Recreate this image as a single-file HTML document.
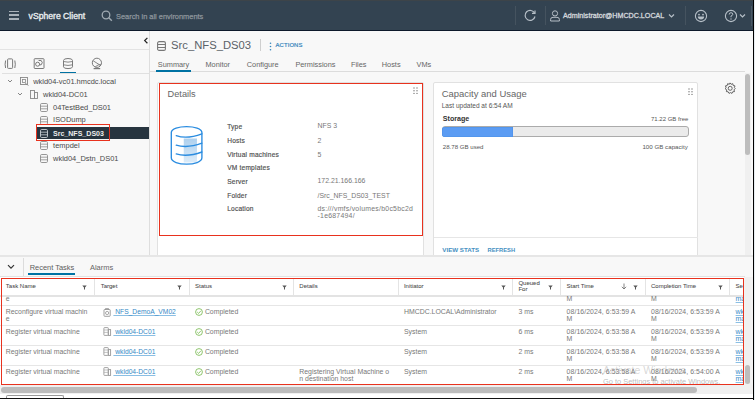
<!DOCTYPE html>
<html><head><meta charset="utf-8">
<style>
*{box-sizing:border-box;margin:0;padding:0}
html,body{width:755px;height:400px;overflow:hidden;background:#fff}
body{position:relative;font-family:"Liberation Sans",sans-serif;color:#565656}
.a{position:absolute;white-space:nowrap}
svg.a{overflow:visible}
</style></head><body>
<div class="a" style="left:0px;top:0px;width:753px;height:31px;background:#334351;"></div>
<div class="a" style="left:0px;top:0px;width:753px;height:1px;background:#3d4449;"></div>
<div class="a" style="left:0px;top:30px;width:753px;height:1px;background:#0d1a2b;"></div>
<div class="a" style="left:9px;top:10.8px;width:10px;height:1.6px;background:#a9b2ba;"></div>
<div class="a" style="left:9px;top:14.4px;width:10px;height:1.6px;background:#a9b2ba;"></div>
<div class="a" style="left:9px;top:18px;width:10px;height:1.6px;background:#a9b2ba;"></div>
<div class="a" style="left:28.6px;top:10.58px;font-size:8.65px;line-height:11.25px;color:#e9ecef;-webkit-text-stroke:0.35px #e9ecef;">vSphere Client</div>
<svg class="a" style="left:101px;top:10px" width="12" height="12" viewBox="0 0 12 12"><circle cx="5" cy="5" r="3.8" fill="none" stroke="#a0aab2" stroke-width="1.3"/><line x1="7.8" y1="7.8" x2="10.8" y2="10.8" stroke="#a0aab2" stroke-width="1.4"/></svg>
<div class="a" style="left:116px;top:12.10px;font-size:7.42px;line-height:9.65px;color:#8d959c;-webkit-text-stroke:0.25px #8d959c;">Search in all environments</div>
<div class="a" style="left:515px;top:6px;width:1px;height:19px;background:#45535f;"></div>
<svg class="a" style="left:524px;top:9px" width="13" height="13" viewBox="0 0 13 13"><path d="M10.6 4.2 A5 5 0 1 0 11 7.5" fill="none" stroke="#b6bfc7" stroke-width="1.2"/><path d="M8 4.4 L11 4.4 L11 1.4" fill="none" stroke="#b6bfc7" stroke-width="1.2"/></svg>
<div class="a" style="left:545px;top:6px;width:1px;height:19px;background:#45535f;"></div>
<svg class="a" style="left:550px;top:10px" width="10" height="12" viewBox="0 0 10 12"><circle cx="5" cy="3.4" r="2.6" fill="none" stroke="#b6bfc7" stroke-width="1"/><path d="M0.6 11 L0.6 9.5 Q0.6 7.3 3 7.3 L7 7.3 Q9.4 7.3 9.4 9.5 L9.4 11 Z" fill="none" stroke="#b6bfc7" stroke-width="1"/></svg>
<div class="a" style="left:563px;top:12.38px;font-size:7.15px;line-height:9.29px;color:#d3d8dc;-webkit-text-stroke:0.3px #d3d8dc;">Administrator@HMCDC.LOCAL</div>
<svg class="a" style="left:668px;top:12.5px" width="7" height="6" viewBox="0 0 7 6"><path d="M1 1.5 L3.5 4 L6 1.5" fill="none" stroke="#b6bfc7" stroke-width="1.2"/></svg>
<div class="a" style="left:685px;top:6px;width:1px;height:19px;background:#45535f;"></div>
<svg class="a" style="left:694px;top:9px" width="14" height="14" viewBox="0 0 14 14"><circle cx="7" cy="7" r="5.6" fill="none" stroke="#b6bfc7" stroke-width="1.1"/><circle cx="5" cy="5.6" r="0.9" fill="#b6bfc7"/><circle cx="9" cy="5.6" r="0.9" fill="#b6bfc7"/><path d="M3.8 7.6 L10.2 7.6 Q10 10.6 7 10.6 Q4 10.6 3.8 7.6Z" fill="#b6bfc7"/></svg>
<svg class="a" style="left:724px;top:9px" width="14" height="14" viewBox="0 0 14 14"><circle cx="7" cy="7" r="5.6" fill="none" stroke="#b6bfc7" stroke-width="1.1"/><path d="M5.2 5.5 Q5.2 3.7 7 3.7 Q8.8 3.7 8.8 5.3 Q8.8 6.4 7 7 L7 8.3" fill="none" stroke="#b6bfc7" stroke-width="1"/><circle cx="7" cy="10" r="0.7" fill="#b6bfc7"/></svg>
<svg class="a" style="left:739px;top:13px" width="7" height="6" viewBox="0 0 7 6"><path d="M1 1.5 L3.5 4 L6 1.5" fill="none" stroke="#b6bfc7" stroke-width="1.2"/></svg>
<div class="a" style="left:751px;top:6px;width:1px;height:20px;background:#4a5864;"></div>
<div class="a" style="left:753px;top:0px;width:1px;height:400px;background:#000;"></div>
<div class="a" style="left:754px;top:0px;width:1px;height:400px;background:#e8eef2;"></div>
<div class="a" style="left:0px;top:31px;width:149px;height:224px;background:#f8f8f8;"></div>
<div class="a" style="left:149px;top:31px;width:1px;height:224px;background:#dedede;"></div>
<svg class="a" style="left:142.5px;top:36px" width="6" height="9" viewBox="0 0 6 9"><path d="M4.4 1.9 L1.7 4.6 L4.4 7.3" fill="none" stroke="#222" stroke-width="1.25"/></svg>
<div class="a" style="left:0px;top:49px;width:149px;height:1px;background:#e3e3e3;"></div>
<svg class="a" style="left:0px;top:54px" width="110" height="20" viewBox="0 54 110 20"><g fill="none" stroke="#7a7a7a" stroke-width="1"><rect x="7.6" y="58.9" width="5" height="9.5" rx="0.8"/><path d="M5.6 60.5 Q4.6 64.3 5.6 68 M14.8 60.5 Q15.8 64.3 14.8 68"/><rect x="34.2" y="58.7" width="9.8" height="9.8" rx="0.6"/><circle cx="37.6" cy="64.2" r="2"/><path d="M38.6 60.5 L41.2 60.5 L42.3 62.6 L41.2 64.8 L39.3 64.8"/><path d="M63.5 60.5 Q63.5 58.5 68 58.5 Q72.5 58.5 72.5 60.5 L72.5 66.8 Q72.5 68.6 68 68.6 Q63.5 68.6 63.5 66.8 Z"/><path d="M63.5 61.5 Q68 62.8 72.5 61.5 M63.5 64.8 Q68 66.1 72.5 64.8" stroke-width="0.9"/><circle cx="96.9" cy="62.8" r="4.6"/><path d="M93.2 60.8 L100.2 65.2 M95.2 66.9 Q98 64.2 101.1 64.6" stroke-width="0.9"/><path d="M93.6 68.6 L100.2 68.6" stroke-width="1.2"/></g></svg>
<div class="a" style="left:60px;top:72px;width:16px;height:1.6px;background:#0072a3;"></div>
<div class="a" style="left:2px;top:73px;width:147px;height:1px;background:#e0e0e0;"></div>
<svg class="a" style="left:7px;top:79px" width="6" height="5" viewBox="0 0 6 5"><path d="M1 1 L3 3 L5 1" fill="none" stroke="#777" stroke-width="0.9"/></svg>
<svg class="a" style="left:20px;top:77px" width="9" height="9" viewBox="0 0 9 9"><rect x="0.5" y="0.5" width="7" height="7" fill="none" stroke="#888" stroke-width="0.9"/><rect x="2.5" y="2.5" width="3" height="3" fill="none" stroke="#888" stroke-width="0.8"/><path d="M5 6 L8.5 8.5" stroke="#888" stroke-width="0.8"/></svg>
<div class="a" style="left:33.2px;top:76.57px;font-size:7.45px;line-height:9.69px;color:#4a4a4a;">wkld04-vc01.hmcdc.local</div>
<svg class="a" style="left:17px;top:92px" width="6" height="5" viewBox="0 0 6 5"><path d="M1 1 L3 3 L5 1" fill="none" stroke="#777" stroke-width="0.9"/></svg>
<svg class="a" style="left:30px;top:90px" width="8" height="9" viewBox="0 0 8 9"><rect x="0.5" y="0.5" width="4" height="8" fill="none" stroke="#888" stroke-width="0.9"/><rect x="4.5" y="2.5" width="3" height="6" fill="none" stroke="#888" stroke-width="0.9"/></svg>
<div class="a" style="left:43.1px;top:89.57px;font-size:7.45px;line-height:9.69px;color:#4a4a4a;">wkld04-DC01</div>
<svg class="a" style="left:40px;top:103.0px" width="8" height="9" viewBox="0 0 8 9"><rect x="0.5" y="0.5" width="7" height="8" rx="1.2" fill="none" stroke="#8a8a8a" stroke-width="0.9"/><path d="M0.5 3.2 L7.5 3.2 M0.5 5.8 L7.5 5.8" stroke="#8a8a8a" stroke-width="0.8"/></svg>
<div class="a" style="left:53.1px;top:102.87px;font-size:7.45px;line-height:9.69px;color:#4a4a4a;">04TestBed_DS01</div>
<svg class="a" style="left:40px;top:115.5px" width="8" height="9" viewBox="0 0 8 9"><rect x="0.5" y="0.5" width="7" height="8" rx="1.2" fill="none" stroke="#8a8a8a" stroke-width="0.9"/><path d="M0.5 3.2 L7.5 3.2 M0.5 5.8 L7.5 5.8" stroke="#8a8a8a" stroke-width="0.8"/></svg>
<div class="a" style="left:53.1px;top:115.37px;font-size:7.45px;line-height:9.69px;color:#4a4a4a;">ISODump</div>
<svg class="a" style="left:40px;top:141.25px" width="8" height="9" viewBox="0 0 8 9"><rect x="0.5" y="0.5" width="7" height="8" rx="1.2" fill="none" stroke="#8a8a8a" stroke-width="0.9"/><path d="M0.5 3.2 L7.5 3.2 M0.5 5.8 L7.5 5.8" stroke="#8a8a8a" stroke-width="0.8"/></svg>
<div class="a" style="left:53.1px;top:141.12px;font-size:7.45px;line-height:9.69px;color:#4a4a4a;">tempdel</div>
<svg class="a" style="left:40px;top:154.25px" width="8" height="9" viewBox="0 0 8 9"><rect x="0.5" y="0.5" width="7" height="8" rx="1.2" fill="none" stroke="#8a8a8a" stroke-width="0.9"/><path d="M0.5 3.2 L7.5 3.2 M0.5 5.8 L7.5 5.8" stroke="#8a8a8a" stroke-width="0.8"/></svg>
<div class="a" style="left:53.1px;top:154.12px;font-size:7.45px;line-height:9.69px;color:#4a4a4a;">wkld04_Dstn_DS01</div>
<div class="a" style="left:36px;top:127px;width:113px;height:12px;background:#27343f;"></div>
<svg class="a" style="left:40px;top:128.5px" width="8" height="9" viewBox="0 0 8 9"><rect x="0.5" y="0.5" width="7" height="8" rx="1.2" fill="none" stroke="#c9d0d6" stroke-width="0.9"/><path d="M0.5 3.2 L7.5 3.2 M0.5 5.8 L7.5 5.8" stroke="#c9d0d6" stroke-width="0.8"/></svg>
<div class="a" style="left:53px;top:128.77px;font-size:7.05px;line-height:9.17px;color:#ececec;font-weight:bold;">Src_NFS_DS03</div>
<div class="a" style="left:36px;top:124px;width:74px;height:16.8px;background:transparent;border:1.5px solid #e8321e;"></div>
<div class="a" style="left:150px;top:31px;width:603px;height:224px;background:#f8f8f8;"></div>
<svg class="a" style="left:157px;top:41px" width="9" height="10" viewBox="0 0 9 10"><rect x="0.6" y="0.6" width="7.8" height="8.8" rx="1.5" fill="none" stroke="#777" stroke-width="1.1"/><path d="M0.6 3.5 L8.4 3.5 M0.6 6.5 L8.4 6.5" stroke="#777" stroke-width="1"/></svg>
<div class="a" style="left:171px;top:37.79px;font-size:11.25px;line-height:14.62px;color:#5b6268;">Src_NFS_DS03</div>
<div class="a" style="left:260px;top:39px;width:1px;height:12px;background:#cfcfcf;"></div>
<svg class="a" style="left:269px;top:42px" width="3" height="9" viewBox="0 0 3 9"><circle cx="1.5" cy="1.2" r="0.8" fill="#3585bc"/><circle cx="1.5" cy="4.5" r="0.8" fill="#3585bc"/><circle cx="1.5" cy="7.8" r="0.8" fill="#3585bc"/></svg>
<div class="a" style="left:275.6px;top:41.77px;font-size:5.85px;line-height:7.6px;color:#3585bc;letter-spacing:0.12px;-webkit-text-stroke:0.2px #3585bc;">ACTIONS</div>
<div class="a" style="left:157.8px;top:59.68px;font-size:7.35px;line-height:9.55px;color:#666;">Summary</div>
<div class="a" style="left:205.5px;top:59.68px;font-size:7.35px;line-height:9.55px;color:#666;">Monitor</div>
<div class="a" style="left:246.8px;top:59.68px;font-size:7.35px;line-height:9.55px;color:#666;">Configure</div>
<div class="a" style="left:295.4px;top:59.68px;font-size:7.35px;line-height:9.55px;color:#666;">Permissions</div>
<div class="a" style="left:351px;top:59.68px;font-size:7.35px;line-height:9.55px;color:#666;">Files</div>
<div class="a" style="left:381.8px;top:59.68px;font-size:7.35px;line-height:9.55px;color:#666;">Hosts</div>
<div class="a" style="left:416.6px;top:59.68px;font-size:7.35px;line-height:9.55px;color:#666;">VMs</div>
<div class="a" style="left:150px;top:71px;width:595px;height:1px;background:#dcdcdc;"></div>
<div class="a" style="left:156px;top:70.3px;width:35px;height:1.7px;background:#0072a3;"></div>
<svg class="a" style="left:724px;top:82px" width="12" height="12" viewBox="0 0 12 12"><path d="M6 0.9 L7.1 2.3 L8.8 1.7 L9.2 3.5 L11 3.9 L10.4 5.6 L11.2 6.6 L10 7.9 L10.5 9.6 L8.7 9.8 L8 11.4 L6.5 10.6 L5 11.4 L4.2 9.8 L2.4 9.6 L2.8 7.9 L1 6.6 L2.2 5.6 L1.4 3.9 L3.2 3.5 L3.6 1.7 L5.3 2.3 Z" fill="none" stroke="#555" stroke-width="0.9" stroke-linejoin="round"/><circle cx="6.2" cy="6.3" r="2" fill="none" stroke="#555" stroke-width="0.9"/></svg>
<div class="a" style="left:745px;top:73px;width:6px;height:182px;background:#f0f0f0;"></div>
<div class="a" style="left:745.3px;top:74px;width:4.8px;height:81px;background:#bdbdbd;border-radius:2.5px;"></div>
<div class="a" style="left:156.8px;top:81.5px;width:267.7px;height:180px;background:#fff;border:1px solid #e1e1e1;border-radius:2px;"></div>
<div class="a" style="left:159px;top:82.5px;width:264px;height:153px;background:transparent;border:1.5px solid #e8321e;"></div>
<div class="a" style="left:167.6px;top:89.33px;font-size:9.2px;line-height:11.96px;color:#666;">Details</div>
<svg class="a" style="left:413px;top:87px" width="5" height="8" viewBox="0 0 5 8"><circle cx="1" cy="1" r="0.7" fill="#777"/><circle cx="1" cy="3.7" r="0.7" fill="#777"/><circle cx="1" cy="6.4" r="0.7" fill="#777"/><circle cx="4" cy="1" r="0.7" fill="#777"/><circle cx="4" cy="3.7" r="0.7" fill="#777"/><circle cx="4" cy="6.4" r="0.7" fill="#777"/></svg>
<svg class="a" style="left:165px;top:120px" width="45" height="50" viewBox="0 0 45 50"><defs><linearGradient id="g1" x1="0" y1="0" x2="0" y2="1"><stop offset="0" stop-color="#aed0ee"/><stop offset="1" stop-color="#dcecf9"/></linearGradient></defs><rect x="18.75" y="18.5" width="13.2" height="24" fill="url(#g1)"/><path d="M6.3 12.5 C6.3 4.6 36.9 4.6 36.9 12.5 L36.9 37.8 C36.9 46.2 6.3 46.2 6.3 37.8 Z" fill="none" stroke="#2a8ce0" stroke-width="1.35"/><path d="M11.2 15.6 Q22 19.4 36.9 13.8 M11.2 25.1 Q22 28.6 36.9 23.2 M11.2 33.9 Q22 37.4 36.9 32" fill="none" stroke="#2a8ce0" stroke-width="1.35" stroke-linecap="round"/></svg>
<div class="a" style="left:227.2px;top:122.72px;font-size:6.6px;line-height:8.58px;color:#4e4e4e;letter-spacing:0.2px;-webkit-text-stroke:0.15px #4e4e4e;">Type</div>
<div class="a" style="left:317.5px;top:122.42px;font-size:6.9px;line-height:8.97px;color:#787878;">NFS 3</div>
<div class="a" style="left:227.2px;top:137.42px;font-size:6.6px;line-height:8.58px;color:#4e4e4e;letter-spacing:0.2px;-webkit-text-stroke:0.15px #4e4e4e;">Hosts</div>
<div class="a" style="left:317.5px;top:137.12px;font-size:6.9px;line-height:8.97px;color:#787878;">2</div>
<div class="a" style="left:227.2px;top:151.42px;font-size:6.6px;line-height:8.58px;color:#4e4e4e;letter-spacing:0.2px;-webkit-text-stroke:0.15px #4e4e4e;">Virtual machines</div>
<div class="a" style="left:317.5px;top:151.12px;font-size:6.9px;line-height:8.97px;color:#787878;">5</div>
<div class="a" style="left:227.2px;top:163.92px;font-size:6.6px;line-height:8.58px;color:#4e4e4e;letter-spacing:0.2px;-webkit-text-stroke:0.15px #4e4e4e;">VM templates</div>
<div class="a" style="left:227.2px;top:177.72px;font-size:6.6px;line-height:8.58px;color:#4e4e4e;letter-spacing:0.2px;-webkit-text-stroke:0.15px #4e4e4e;">Server</div>
<div class="a" style="left:317.5px;top:177.42px;font-size:6.9px;line-height:8.97px;color:#787878;">172.21.166.166</div>
<div class="a" style="left:227.2px;top:192.22px;font-size:6.6px;line-height:8.58px;color:#4e4e4e;letter-spacing:0.2px;-webkit-text-stroke:0.15px #4e4e4e;">Folder</div>
<div class="a" style="left:317.5px;top:191.92px;font-size:6.9px;line-height:8.97px;color:#787878;">/Src_NFS_DS03_TEST</div>
<div class="a" style="left:227.2px;top:204.82px;font-size:6.6px;line-height:8.58px;color:#4e4e4e;letter-spacing:0.2px;-webkit-text-stroke:0.15px #4e4e4e;">Location</div>
<div class="a" style="left:317.5px;top:204.52px;font-size:6.9px;line-height:8.97px;color:#787878;letter-spacing:0.25px;">ds:///vmfs/volumes/b0c5bc2d</div>
<div class="a" style="left:317.5px;top:212.32px;font-size:6.9px;line-height:8.97px;color:#787878;letter-spacing:0.25px;">-1e687494/</div>
<div class="a" style="left:432.5px;top:81.5px;width:265.5px;height:180px;background:#fff;border:1px solid #e1e1e1;border-radius:2px;"></div>
<div class="a" style="left:441.7px;top:87.78px;font-size:9.45px;line-height:12.29px;color:#666;">Capacity and Usage</div>
<svg class="a" style="left:688px;top:87.5px" width="5" height="8" viewBox="0 0 5 8"><circle cx="1" cy="1" r="0.7" fill="#777"/><circle cx="1" cy="3.7" r="0.7" fill="#777"/><circle cx="1" cy="6.4" r="0.7" fill="#777"/><circle cx="4" cy="1" r="0.7" fill="#777"/><circle cx="4" cy="3.7" r="0.7" fill="#777"/><circle cx="4" cy="6.4" r="0.7" fill="#777"/></svg>
<div class="a" style="left:441.7px;top:101.87px;font-size:6.55px;line-height:8.52px;color:#565656;">Last updated at 6:54 AM</div>
<div class="a" style="left:442.8px;top:114.82px;font-size:7.1px;line-height:9.23px;color:#333;font-weight:bold;">Storage</div>
<div class="a" style="left:651px;top:115.82px;font-size:6.0px;line-height:7.8px;color:#565656;">71.22 GB free</div>
<div class="a" style="left:441.7px;top:126.3px;width:247.3px;height:10.6px;background:#ebebeb;border:1px solid #ababab;border-radius:3px;"></div>
<div class="a" style="left:441.9px;top:126.6px;width:71.1px;height:10px;background:#5b9cf3;border-radius:3px 0 0 3px;box-shadow:inset 0 0 0 0.5px #4c8fe6;"></div>
<div class="a" style="left:442.8px;top:143.12px;font-size:6.1px;line-height:7.93px;color:#565656;">28.78 GB used</div>
<div class="a" style="left:642.4px;top:143.02px;font-size:6.2px;line-height:8.06px;color:#565656;">100 GB capacity</div>
<div class="a" style="left:433.5px;top:237px;width:264px;height:1px;background:#e6e6e6;"></div>
<div class="a" style="left:442.3px;top:245.62px;font-size:6.2px;line-height:8.06px;color:#4590c2;font-weight:bold;">VIEW STATS</div>
<div class="a" style="left:487.6px;top:246.67px;font-size:5.75px;line-height:7.48px;color:#4590c2;font-weight:bold;">REFRESH</div>
<div class="a" style="left:0px;top:255px;width:753px;height:23px;background:#f8f8f8;"></div>
<div class="a" style="left:0px;top:255px;width:753px;height:1.5px;background:#e6e6e6;"></div>
<svg class="a" style="left:7px;top:264px" width="8" height="6" viewBox="0 0 8 6"><path d="M1 1.2 L4 4.2 L7 1.2" fill="none" stroke="#333" stroke-width="1.2"/></svg>
<div class="a" style="left:22.5px;top:257.5px;width:1px;height:18px;background:#dcdcdc;"></div>
<div class="a" style="left:29.7px;top:263.07px;font-size:7.45px;line-height:9.69px;color:#5c5c5c;">Recent Tasks</div>
<div class="a" style="left:90px;top:263.07px;font-size:7.45px;line-height:9.69px;color:#666;">Alarms</div>
<div class="a" style="left:27.8px;top:273.3px;width:47.7px;height:1.6px;background:#0072a3;"></div>
<div class="a" style="left:0px;top:275.5px;width:745px;height:1px;background:#e2e2e2;"></div>
<div class="a" style="left:0px;top:276.5px;width:745px;height:109px;background:#fff;"></div>
<div class="a" style="left:0px;top:295px;width:745px;height:1.6px;background:#e3e3e3;"></div>
<div class="a" style="left:5.8px;top:282.82px;font-size:6.0px;line-height:7.8px;color:#4a4a4a;-webkit-text-stroke:0.05px #4a4a4a;">Task Name</div>
<svg class="a" style="left:82.3px;top:285px" width="5" height="5" viewBox="0 0 5 5"><path d="M0.3 0.5 L4.7 0.5 L3 2.5 L3 4.6 L2 4.6 L2 2.5 Z" fill="#555"/></svg>
<div class="a" style="left:94px;top:279px;width:1px;height:16px;background:#e4e4e4;"></div>
<div class="a" style="left:100.7px;top:282.82px;font-size:6.0px;line-height:7.8px;color:#4a4a4a;-webkit-text-stroke:0.05px #4a4a4a;">Target</div>
<svg class="a" style="left:176.8px;top:285px" width="5" height="5" viewBox="0 0 5 5"><path d="M0.3 0.5 L4.7 0.5 L3 2.5 L3 4.6 L2 4.6 L2 2.5 Z" fill="#555"/></svg>
<div class="a" style="left:188.6px;top:279px;width:1px;height:16px;background:#e4e4e4;"></div>
<div class="a" style="left:195px;top:282.82px;font-size:6.0px;line-height:7.8px;color:#4a4a4a;-webkit-text-stroke:0.05px #4a4a4a;">Status</div>
<svg class="a" style="left:281.5px;top:285px" width="5" height="5" viewBox="0 0 5 5"><path d="M0.3 0.5 L4.7 0.5 L3 2.5 L3 4.6 L2 4.6 L2 2.5 Z" fill="#555"/></svg>
<div class="a" style="left:293.3px;top:279px;width:1px;height:16px;background:#e4e4e4;"></div>
<div class="a" style="left:299.3px;top:282.82px;font-size:6.0px;line-height:7.8px;color:#4a4a4a;-webkit-text-stroke:0.05px #4a4a4a;">Details</div>
<div class="a" style="left:398px;top:279px;width:1px;height:16px;background:#e4e4e4;"></div>
<div class="a" style="left:403.9px;top:282.82px;font-size:6.0px;line-height:7.8px;color:#4a4a4a;-webkit-text-stroke:0.05px #4a4a4a;">Initiator</div>
<svg class="a" style="left:500.5px;top:285px" width="5" height="5" viewBox="0 0 5 5"><path d="M0.3 0.5 L4.7 0.5 L3 2.5 L3 4.6 L2 4.6 L2 2.5 Z" fill="#555"/></svg>
<div class="a" style="left:512.4px;top:279px;width:1px;height:16px;background:#e4e4e4;"></div>
<svg class="a" style="left:548.3px;top:285px" width="5" height="5" viewBox="0 0 5 5"><path d="M0.3 0.5 L4.7 0.5 L3 2.5 L3 4.6 L2 4.6 L2 2.5 Z" fill="#555"/></svg>
<div class="a" style="left:559.8px;top:279px;width:1px;height:16px;background:#e4e4e4;"></div>
<div class="a" style="left:566.6px;top:282.82px;font-size:6.0px;line-height:7.8px;color:#4a4a4a;-webkit-text-stroke:0.05px #4a4a4a;">Start Time</div>
<svg class="a" style="left:633.1px;top:285px" width="5" height="5" viewBox="0 0 5 5"><path d="M0.3 0.5 L4.7 0.5 L3 2.5 L3 4.6 L2 4.6 L2 2.5 Z" fill="#555"/></svg>
<div class="a" style="left:645px;top:279px;width:1px;height:16px;background:#e4e4e4;"></div>
<div class="a" style="left:651px;top:282.82px;font-size:6.0px;line-height:7.8px;color:#4a4a4a;-webkit-text-stroke:0.05px #4a4a4a;">Completion Time</div>
<svg class="a" style="left:717.5px;top:285px" width="5" height="5" viewBox="0 0 5 5"><path d="M0.3 0.5 L4.7 0.5 L3 2.5 L3 4.6 L2 4.6 L2 2.5 Z" fill="#555"/></svg>
<div class="a" style="left:729px;top:279px;width:1px;height:16px;background:#e4e4e4;"></div>
<div class="a" style="left:735.6px;top:282.82px;font-size:6.0px;line-height:7.8px;color:#4a4a4a;-webkit-text-stroke:0.05px #4a4a4a;">Se</div>
<div class="a" style="left:518.4px;top:280.02px;font-size:6.0px;line-height:7.8px;color:#4a4a4a;-webkit-text-stroke:0.05px #4a4a4a;">Queued</div>
<div class="a" style="left:518.4px;top:286.42px;font-size:6.0px;line-height:7.8px;color:#4a4a4a;-webkit-text-stroke:0.05px #4a4a4a;">For</div>
<svg class="a" style="left:621px;top:283px" width="6" height="7" viewBox="0 0 6 7"><path d="M3 0.5 L3 6 M0.8 3.8 L3 6 L5.2 3.8" fill="none" stroke="#666" stroke-width="0.8"/></svg>
<div class="a" style="left:5.8px;top:295.32px;font-size:6.9px;line-height:8.97px;color:#787878;">e</div>
<div class="a" style="left:566.6px;top:295.32px;font-size:6.9px;line-height:8.97px;color:#787878;">M</div>
<div class="a" style="left:651px;top:295.32px;font-size:6.9px;line-height:8.97px;color:#787878;">M</div>
<div class="a" style="left:0px;top:305px;width:745px;height:1px;background:#e6e6e6;"></div>
<div class="a" style="left:0px;top:325px;width:745px;height:1px;background:#e6e6e6;"></div>
<div class="a" style="left:0px;top:345px;width:745px;height:1px;background:#e6e6e6;"></div>
<div class="a" style="left:0px;top:365px;width:745px;height:1px;background:#e6e6e6;"></div>
<div class="a" style="left:5.8px;top:307.72px;font-size:6.9px;line-height:8.97px;color:#787878;">Reconfigure virtual machin</div>
<div class="a" style="left:5.8px;top:315.32px;font-size:6.9px;line-height:8.97px;color:#787878;">e</div>
<svg class="a" style="left:102.5px;top:307.6px" width="9" height="9" viewBox="0 0 9 9"><path d="M1 2.2 L1 7.6 Q1 8.3 1.7 8.3 L6.5 8.3 Q7.2 8.3 7.2 7.6 L7.2 2.2 Q7.2 1.5 6.5 1.5 L1.7 1.5 Q1 1.5 1 2.2 Z" fill="none" stroke="#888" stroke-width="0.8"/><path d="M2.5 1.5 L2.5 0.5 L5.5 0.5 L5.5 1.5" fill="none" stroke="#888" stroke-width="0.7"/><circle cx="4.1" cy="5" r="1.6" fill="none" stroke="#888" stroke-width="0.7"/></svg>
<div class="a" style="left:113.4px;top:307.92px;font-size:6.7px;line-height:8.71px;color:#3589c6;text-decoration:underline;text-decoration-color:#8bbfe4;text-decoration-thickness:0.8px;text-underline-offset:1px;">&nbsp;NFS_DemoA_VM02</div>
<svg class="a" style="left:195px;top:308.1px" width="8" height="8" viewBox="0 0 8 8"><circle cx="4" cy="4" r="3.4" fill="none" stroke="#74b84a" stroke-width="0.8"/><path d="M2.2 4 L3.6 5.4 L5.9 2.8" fill="none" stroke="#74b84a" stroke-width="0.8"/></svg>
<div class="a" style="left:204.9px;top:307.72px;font-size:6.9px;line-height:8.97px;color:#787878;">Completed</div>
<div class="a" style="left:404px;top:307.72px;font-size:6.9px;line-height:8.97px;color:#787878;">HMCDC.LOCAL\Administrator</div>
<div class="a" style="left:518.4px;top:307.72px;font-size:6.9px;line-height:8.97px;color:#787878;">3 ms</div>
<div class="a" style="left:566.6px;top:307.72px;font-size:6.9px;line-height:8.97px;color:#787878;letter-spacing:0.07px;">08/16/2024, 6:53:59 A</div>
<div class="a" style="left:566.6px;top:315.32px;font-size:6.9px;line-height:8.97px;color:#787878;">M</div>
<div class="a" style="left:651px;top:307.72px;font-size:6.9px;line-height:8.97px;color:#787878;letter-spacing:0.07px;">08/16/2024, 6:53:59 A</div>
<div class="a" style="left:651px;top:315.32px;font-size:6.9px;line-height:8.97px;color:#787878;">M</div>
<div class="a" style="left:735.6px;top:307.72px;font-size:6.9px;line-height:8.97px;color:#3589c6;text-decoration:underline;text-decoration-color:#8bbfe4;text-decoration-thickness:0.8px;text-underline-offset:1px;">wk</div>
<div class="a" style="left:735.6px;top:315.32px;font-size:6.9px;line-height:8.97px;color:#3589c6;text-decoration:underline;text-decoration-color:#8bbfe4;text-decoration-thickness:0.8px;text-underline-offset:1px;">ma</div>
<div class="a" style="left:5.8px;top:327.52px;font-size:6.9px;line-height:8.97px;color:#787878;">Register virtual machine</div>
<svg class="a" style="left:102.5px;top:327.4px" width="8" height="9" viewBox="0 0 8 9"><rect x="0.9" y="0.6" width="4.4" height="7.8" rx="0.6" fill="none" stroke="#999" stroke-width="0.9"/><rect x="5.3" y="2.6" width="2.3" height="5.8" fill="none" stroke="#999" stroke-width="0.9"/><path d="M0.9 3 L5.3 3 M0.9 5.4 L5.3 5.4" stroke="#aaa" stroke-width="0.7"/></svg>
<div class="a" style="left:113.4px;top:327.72px;font-size:6.7px;line-height:8.71px;color:#3589c6;text-decoration:underline;text-decoration-color:#8bbfe4;text-decoration-thickness:0.8px;text-underline-offset:1px;">&nbsp;wkld04-DC01</div>
<svg class="a" style="left:195px;top:327.9px" width="8" height="8" viewBox="0 0 8 8"><circle cx="4" cy="4" r="3.4" fill="none" stroke="#74b84a" stroke-width="0.8"/><path d="M2.2 4 L3.6 5.4 L5.9 2.8" fill="none" stroke="#74b84a" stroke-width="0.8"/></svg>
<div class="a" style="left:204.9px;top:327.52px;font-size:6.9px;line-height:8.97px;color:#787878;">Completed</div>
<div class="a" style="left:404px;top:327.52px;font-size:6.9px;line-height:8.97px;color:#787878;">System</div>
<div class="a" style="left:518.4px;top:327.52px;font-size:6.9px;line-height:8.97px;color:#787878;">6 ms</div>
<div class="a" style="left:566.6px;top:327.52px;font-size:6.9px;line-height:8.97px;color:#787878;letter-spacing:0.07px;">08/16/2024, 6:53:58 A</div>
<div class="a" style="left:566.6px;top:335.12px;font-size:6.9px;line-height:8.97px;color:#787878;">M</div>
<div class="a" style="left:651px;top:327.52px;font-size:6.9px;line-height:8.97px;color:#787878;letter-spacing:0.07px;">08/16/2024, 6:53:59 A</div>
<div class="a" style="left:651px;top:335.12px;font-size:6.9px;line-height:8.97px;color:#787878;">M</div>
<div class="a" style="left:735.6px;top:327.52px;font-size:6.9px;line-height:8.97px;color:#3589c6;text-decoration:underline;text-decoration-color:#8bbfe4;text-decoration-thickness:0.8px;text-underline-offset:1px;">wk</div>
<div class="a" style="left:735.6px;top:335.12px;font-size:6.9px;line-height:8.97px;color:#3589c6;text-decoration:underline;text-decoration-color:#8bbfe4;text-decoration-thickness:0.8px;text-underline-offset:1px;">ma</div>
<div class="a" style="left:5.8px;top:347.52px;font-size:6.9px;line-height:8.97px;color:#787878;">Register virtual machine</div>
<svg class="a" style="left:102.5px;top:347.4px" width="8" height="9" viewBox="0 0 8 9"><rect x="0.9" y="0.6" width="4.4" height="7.8" rx="0.6" fill="none" stroke="#999" stroke-width="0.9"/><rect x="5.3" y="2.6" width="2.3" height="5.8" fill="none" stroke="#999" stroke-width="0.9"/><path d="M0.9 3 L5.3 3 M0.9 5.4 L5.3 5.4" stroke="#aaa" stroke-width="0.7"/></svg>
<div class="a" style="left:113.4px;top:347.72px;font-size:6.7px;line-height:8.71px;color:#3589c6;text-decoration:underline;text-decoration-color:#8bbfe4;text-decoration-thickness:0.8px;text-underline-offset:1px;">&nbsp;wkld04-DC01</div>
<svg class="a" style="left:195px;top:347.9px" width="8" height="8" viewBox="0 0 8 8"><circle cx="4" cy="4" r="3.4" fill="none" stroke="#74b84a" stroke-width="0.8"/><path d="M2.2 4 L3.6 5.4 L5.9 2.8" fill="none" stroke="#74b84a" stroke-width="0.8"/></svg>
<div class="a" style="left:204.9px;top:347.52px;font-size:6.9px;line-height:8.97px;color:#787878;">Completed</div>
<div class="a" style="left:404px;top:347.52px;font-size:6.9px;line-height:8.97px;color:#787878;">System</div>
<div class="a" style="left:518.4px;top:347.52px;font-size:6.9px;line-height:8.97px;color:#787878;">2 ms</div>
<div class="a" style="left:566.6px;top:347.52px;font-size:6.9px;line-height:8.97px;color:#787878;letter-spacing:0.07px;">08/16/2024, 6:53:58 A</div>
<div class="a" style="left:566.6px;top:355.12px;font-size:6.9px;line-height:8.97px;color:#787878;">M</div>
<div class="a" style="left:651px;top:347.52px;font-size:6.9px;line-height:8.97px;color:#787878;letter-spacing:0.07px;">08/16/2024, 6:53:59 A</div>
<div class="a" style="left:651px;top:355.12px;font-size:6.9px;line-height:8.97px;color:#787878;">M</div>
<div class="a" style="left:735.6px;top:347.52px;font-size:6.9px;line-height:8.97px;color:#3589c6;text-decoration:underline;text-decoration-color:#8bbfe4;text-decoration-thickness:0.8px;text-underline-offset:1px;">wk</div>
<div class="a" style="left:735.6px;top:355.12px;font-size:6.9px;line-height:8.97px;color:#3589c6;text-decoration:underline;text-decoration-color:#8bbfe4;text-decoration-thickness:0.8px;text-underline-offset:1px;">ma</div>
<div class="a" style="left:5.8px;top:367.52px;font-size:6.9px;line-height:8.97px;color:#787878;">Register virtual machine</div>
<svg class="a" style="left:102.5px;top:367.4px" width="8" height="9" viewBox="0 0 8 9"><rect x="0.9" y="0.6" width="4.4" height="7.8" rx="0.6" fill="none" stroke="#999" stroke-width="0.9"/><rect x="5.3" y="2.6" width="2.3" height="5.8" fill="none" stroke="#999" stroke-width="0.9"/><path d="M0.9 3 L5.3 3 M0.9 5.4 L5.3 5.4" stroke="#aaa" stroke-width="0.7"/></svg>
<div class="a" style="left:113.4px;top:367.72px;font-size:6.7px;line-height:8.71px;color:#3589c6;text-decoration:underline;text-decoration-color:#8bbfe4;text-decoration-thickness:0.8px;text-underline-offset:1px;">&nbsp;wkld04-DC01</div>
<svg class="a" style="left:195px;top:367.9px" width="8" height="8" viewBox="0 0 8 8"><circle cx="4" cy="4" r="3.4" fill="none" stroke="#74b84a" stroke-width="0.8"/><path d="M2.2 4 L3.6 5.4 L5.9 2.8" fill="none" stroke="#74b84a" stroke-width="0.8"/></svg>
<div class="a" style="left:204.9px;top:367.52px;font-size:6.9px;line-height:8.97px;color:#787878;">Completed</div>
<div class="a" style="left:299.3px;top:367.52px;font-size:6.9px;line-height:8.97px;color:#787878;">Registering Virtual Machine o</div>
<div class="a" style="left:299.3px;top:375.12px;font-size:6.9px;line-height:8.97px;color:#787878;">n destination host</div>
<div class="a" style="left:404px;top:367.52px;font-size:6.9px;line-height:8.97px;color:#787878;">System</div>
<div class="a" style="left:518.4px;top:367.52px;font-size:6.9px;line-height:8.97px;color:#787878;">2 ms</div>
<div class="a" style="left:566.6px;top:367.52px;font-size:6.9px;line-height:8.97px;color:#787878;letter-spacing:0.07px;">08/16/2024, 6:53:58 A</div>
<div class="a" style="left:566.6px;top:375.12px;font-size:6.9px;line-height:8.97px;color:#787878;">M</div>
<div class="a" style="left:651px;top:367.52px;font-size:6.9px;line-height:8.97px;color:#787878;letter-spacing:0.07px;">08/16/2024, 6:54:00 A</div>
<div class="a" style="left:651px;top:375.12px;font-size:6.9px;line-height:8.97px;color:#787878;">M</div>
<div class="a" style="left:735.6px;top:367.52px;font-size:6.9px;line-height:8.97px;color:#3589c6;text-decoration:underline;text-decoration-color:#8bbfe4;text-decoration-thickness:0.8px;text-underline-offset:1px;">wk</div>
<div class="a" style="left:735.6px;top:375.12px;font-size:6.9px;line-height:8.97px;color:#3589c6;text-decoration:underline;text-decoration-color:#8bbfe4;text-decoration-thickness:0.8px;text-underline-offset:1px;">ma</div>
<div class="a" style="left:735.6px;top:295.32px;font-size:6.9px;line-height:8.97px;color:#3589c6;text-decoration:underline;text-decoration-color:#8bbfe4;text-decoration-thickness:0.8px;text-underline-offset:1px;">ma</div>
<div class="a" style="left:744px;top:277px;width:9px;height:123px;background:#f2f2f2;"></div>
<div class="a" style="left:1.3px;top:278px;width:743px;height:107px;background:transparent;border:1.5px solid #e8321e;"></div>
<div class="a" style="left:603px;top:364.04px;font-size:10.5px;line-height:13.65px;color:rgba(140,140,140,0.35);">Activate Windows</div>
<div class="a" style="left:603px;top:377.07px;font-size:7.45px;line-height:9.69px;color:rgba(120,120,120,0.5);">Go to Settings to activate Windows.</div>
<div class="a" style="left:745px;top:277px;width:6px;height:109px;background:#f0f0f0;"></div>
<div class="a" style="left:745.3px;top:364.8px;width:4.6px;height:19px;background:#bdbdbd;border-radius:2.5px;"></div>
<div class="a" style="left:0px;top:385px;width:753px;height:9px;background:#f0f0f0;"></div>
<div class="a" style="left:1.3px;top:387.2px;width:696px;height:5.6px;background:#bcbcbc;border-radius:3px;"></div>
<div class="a" style="left:0px;top:394px;width:753px;height:4px;background:#fff;"></div>
<div class="a" style="left:5.8px;top:394.6px;width:58px;height:6px;background:transparent;border:1px solid #999;border-bottom:none;border-radius:2px 2px 0 0;"></div>
<div class="a" style="left:0px;top:398px;width:753px;height:1px;background:#111;"></div>
<div class="a" style="left:0px;top:399px;width:753px;height:1px;background:#fff;"></div>
</body></html>
